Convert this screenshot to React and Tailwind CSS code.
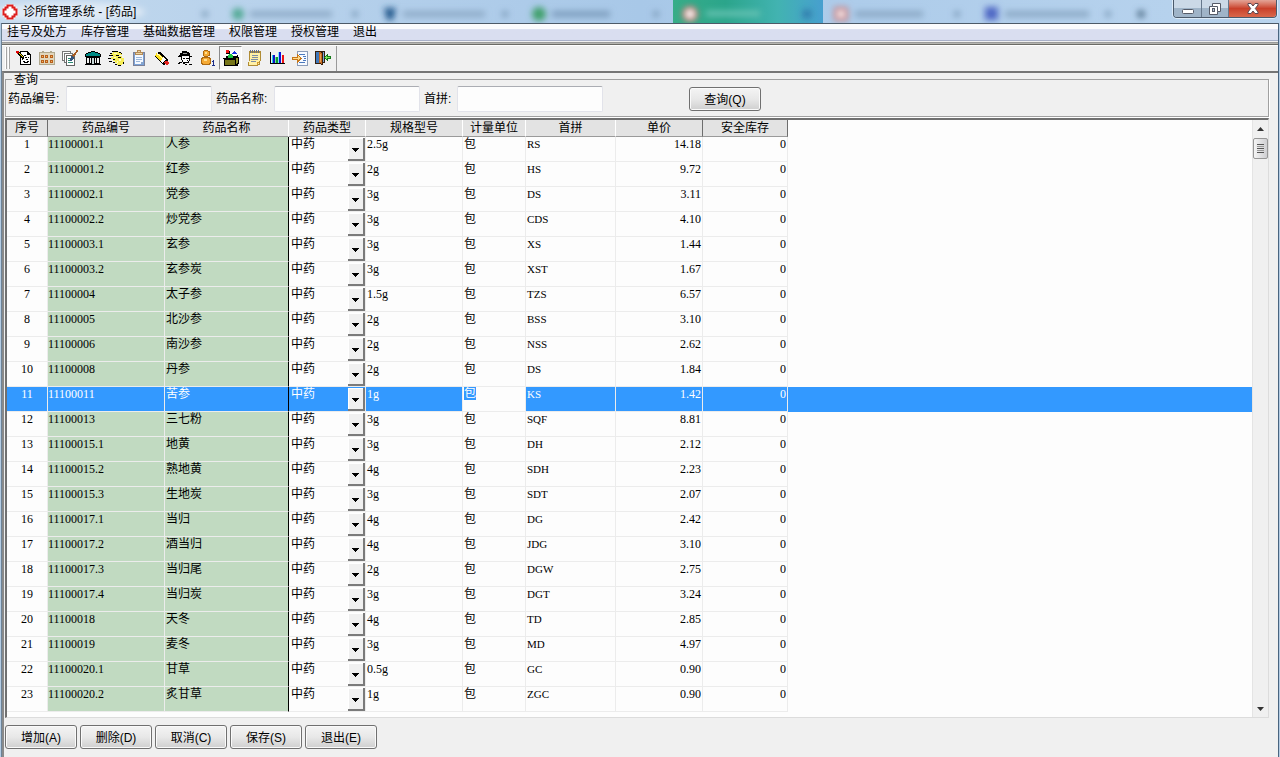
import { useState } from "react";

const menus = ["挂号及处方", "库存管理", "基础数据管理", "权限管理", "授权管理", "退出"];

const columns = [
  { title: "序号", width: "w-[41px]", edge: "border-r-[#6e6e6e]" },
  { title: "药品编号", width: "w-[117px]", edge: "border-r-white" },
  { title: "药品名称", width: "w-[124px]", edge: "border-r-white" },
  { title: "药品类型", width: "w-[77px]", edge: "border-r-white" },
  { title: "规格型号", width: "w-[97px]", edge: "border-r-white" },
  { title: "计量单位", width: "w-[63px]", edge: "border-r-white" },
  { title: "首拼", width: "w-[90px]", edge: "border-r-white" },
  { title: "单价", width: "w-[87px]", edge: "border-r-[#6e6e6e]" },
  { title: "安全库存", width: "w-[85px]", edge: "border-r-[#6e6e6e]" },
];

const medicines = [
  ["11100001.1", "人参", "2.5g", "RS", "14.18"],
  ["11100001.2", "红参", "2g", "HS", "9.72"],
  ["11100002.1", "党参", "3g", "DS", "3.11"],
  ["11100002.2", "炒党参", "3g", "CDS", "4.10"],
  ["11100003.1", "玄参", "3g", "XS", "1.44"],
  ["11100003.2", "玄参炭", "3g", "XST", "1.67"],
  ["11100004", "太子参", "1.5g", "TZS", "6.57"],
  ["11100005", "北沙参", "2g", "BSS", "3.10"],
  ["11100006", "南沙参", "2g", "NSS", "2.62"],
  ["11100008", "丹参", "2g", "DS", "1.84"],
  ["11100011", "苦参", "1g", "KS", "1.42"],
  ["11100013", "三七粉", "3g", "SQF", "8.81"],
  ["11100015.1", "地黄", "3g", "DH", "2.12"],
  ["11100015.2", "熟地黄", "4g", "SDH", "2.23"],
  ["11100015.3", "生地炭", "3g", "SDT", "2.07"],
  ["11100017.1", "当归", "4g", "DG", "2.42"],
  ["11100017.2", "酒当归", "4g", "JDG", "3.10"],
  ["11100017.3", "当归尾", "2g", "DGW", "2.75"],
  ["11100017.4", "当归炭", "3g", "DGT", "3.24"],
  ["11100018", "天冬", "4g", "TD", "2.85"],
  ["11100019", "麦冬", "3g", "MD", "4.97"],
  ["11100020.1", "甘草", "0.5g", "GC", "0.90"],
  ["11100020.2", "炙甘草", "1g", "ZGC", "0.90"],
];

const tools = [
  {
    name: "挂号",
    art: (
      <>
        <path d="M4 1h8v1h1v1h1v1h1v11H4z" fill="#000" />
        <path d="M5 2h6v3h3v9H5z" fill="#fff" />
        <path d="M8 5h2v1H8zM9 7h2v1H9zM12 7h1v1h-1zM6 9h1v1H6zM10 9h2v1h-2zM7 11h2v1H7zM11 11h2v1h-2zM8 12h4v1H8z" fill="#000" />
        <path d="M2 2h2v1h1v1h1v1h1v1h1v3H6V8H5V7H4V6H3V5H2z" fill="#000" />
        <path d="M3 3h1v1h1v1h1v1h1v1H6V6H5V5H4V4H3z" fill="#ffe600" />
        <path d="M0 1h3v2H2v1H1V3H0z" fill="#e00000" />
      </>
    ),
  },
  {
    name: "药柜",
    art: (
      <>
        <path d="M0 2h3V1h2v1h6V1h2v1h3v13H0z" fill="#b0a88e" />
        <path d="M1 3h14v11H1z" fill="#e0d6bd" />
        <path d="M2 5h3v3H2zM6 5h3v3H6zM11 5h3v3h-3zM2 10h3v3H2zM6 10h3v3H6zM11 10h3v3h-3z" fill="#b85f1c" />
        <path d="M3 6h1v1H3zM7 6h1v1H7zM12 6h1v1h-1zM3 11h1v1H3zM7 11h1v1H7zM12 11h1v1h-1z" fill="#f6b55e" />
      </>
    ),
  },
  {
    name: "处方",
    art: (
      <>
        <path d="M0 1h9v10H0z" fill="#777" />
        <path d="M1 2h7v8H1z" fill="#fff" />
        <path d="M2 3h9v10H2z" fill="#777" />
        <path d="M3 4h7v8H3z" fill="#fff" />
        <path d="M4 5h9v11H4z" fill="#646464" />
        <path d="M5 6h7v9H5z" fill="#fff" />
        <path d="M6 8h3v1H6zM6 10h2v1H6zM6 12h5v1H6z" fill="#2b8a72" />
        <path d="M14 0h2v2h-1v1h-1v2h-1v1h-1v1h-2V5h1V4h1V3h1V2h1z" fill="#a85a20" />
        <path d="M9 6h2v1h1v2h-1v1h-1v1H8V8h1z" fill="#34547c" />
      </>
    ),
  },
  {
    name: "库房",
    art: (
      <>
        <path d="M6 1h4v1h3v1h2v1h1v3H0V4h1V3h2V2h3z" fill="#000" />
        <path d="M6 2h4v1h3v1h2v2H1V4h2V3h3z" fill="#008b86" />
        <path d="M1 7h14v7H1zM0 14h16v1H0z" fill="#000" />
        <path d="M2 8h2v5H2zM5 8h1v5H5zM10 8h1v5h-1zM12 8h2v5h-2z" fill="#f0f0f0" />
        <path d="M7 8h2v6H7z" fill="#c8d8d8" />
      </>
    ),
  },
  {
    name: "诊疗",
    art: (
      <>
        <path d="M5 2h7v1h2v2h-3v1h3v2h2v6h-2v1H9v-2H7v-2H5V9H3V7h2V5H3V3h2z" fill="#f6ee57" />
        <path d="M4 1h6v1H4zM11 2h2v1h-2zM13 3h1v1h-1zM2 3h2v1H2zM1 5h4v1H1zM0 8h3v1H0zM5 9h2v1H5zM1 11h3v1H1zM5 12h2v1H5zM8 5h3v1H8zM10 7h3v1h-3zM7 14h2v1H7zM10 15h3v1h-3zM15 12h1v2h-1z" fill="#000" />
        <path d="M6 3h3v1H6zM6 7h2v1H6zM11 9h2v2h-2zM9 11h1v2H9z" fill="#fffcc5" />
      </>
    ),
  },
  {
    name: "记录",
    art: (
      <>
        <path d="M2 2h12v14H2z" fill="#7d8298" />
        <path d="M3 3h10v12H3z" fill="#7ba3d8" />
        <path d="M4 5h8v9H4z" fill="#f5f9ff" />
        <path d="M5 7h6v1H5zM5 9h6v1H5zM5 11h4v1H5z" fill="#9bb7da" />
        <path d="M6 0h4v2h2v3H4V2h2z" fill="#b38a55" />
        <path d="M7 1h2v1H7zM5 3h6v1H5z" fill="#edd5a4" />
        <path d="M10 12h2v2h-2z" fill="#8aa6cc" />
      </>
    ),
  },
  {
    name: "擦除",
    art: (
      <>
        <path d="M3 4 12.500 12.500" stroke="#000" strokeWidth="7" fill="none" />
        <path d="M2 4 9 10" stroke="#ffe21a" strokeWidth="4" fill="none" />
        <path d="M3 3.500 10 9.500" stroke="#fffbd0" strokeWidth="1" fill="none" />
        <path d="M8 9 10.500 11" stroke="#fff" strokeWidth="5" fill="none" />
        <path d="M11 11h3v1h1v2h-1v1h-2v-1h-1v-1h-1v-1h1z" fill="#e52620" />
      </>
    ),
  },
  {
    name: "人员",
    art: (
      <>
        <path d="M5 1h5v1h2v1h1v3h2v1h-3V6H5v1H1V6h1V5h1V3h2z" fill="#000" />
        <path d="M5 7h7v5h-1v1H8v-1H6v-2H5z" fill="#fff" />
        <path d="M4 7h1v3H4zM6 8h2v1H6zM9 8h3v1H9zM12 7h1v4h-1zM10 10h1v1h-1zM5 10h1v2H5zM8 12h3v1H8zM6 12h2v2H6zM11 11h1v2h-1zM2 12h3v1H2zM1 13h2v1H1zM12 14h3v1h-3zM8 14h2v1H8z" fill="#000" />
        <path d="M6 3h4v1H6z" fill="#999" />
      </>
    ),
  },
  {
    name: "用户",
    art: (
      <>
        <path d="M4 0h4v1h2v5H8v1h2v1h1v6h-1v1H2v-1H1V8h1V7h2V6H3V1h1z" fill="#ae6a12" />
        <path d="M4 1h4v1h1v3H8v1H4V5H4zM3 8h6v1h1v4H9v1H3v-1H2V9h1z" fill="#f5a933" />
        <path d="M5 2h2v2H5zM4 9h3v2H4z" fill="#ffdf91" />
        <path d="M13 10h1v5h1v1h-3v-1h1v-3h-1v-1h1z" fill="#1d2c86" />
      </>
    ),
  },
  {
    name: "药品",
    art: (
      <>
        <path d="M0 8h3V6h11V5h1v2h1v7h-1v2H1V9H0z" fill="#000" />
        <path d="M2 10h10v5H2z" fill="#77761a" />
        <path d="M13 8h2v5h-1v1h-1z" fill="#8f8e28" />
        <path d="M3 1h4v3H3z" fill="#000" />
        <path d="M3 0h3v3H3z" fill="#f01414" />
        <path d="M11 1h1v1h1v1h1v1H9V3h1V2h1z" fill="#1933df" />
        <path d="M3 4h3v2H3zM10 4h3v2h-3z" fill="#fff" />
        <path d="M6 4h3v1h1v3H5V5h1z" fill="#18c342" />
      </>
    ),
    pressed: true,
  },
  {
    name: "单据",
    art: (
      <>
        <path d="M3 1h12v10h-1v4h-2v1H2v-4h1z" fill="#b08c35" />
        <path d="M4 3h10v8h-1v3h-2v1H3v-4h1z" fill="#fff0a6" />
        <path d="M4 0h1v3H4zM6 0h1v3H6zM8 0h1v3H8zM10 0h1v3h-1zM12 0h1v3h-1z" fill="#666f84" />
        <path d="M6 5h6v1H6zM6 7h6v1H6zM5 9h7v1H5zM5 11h5v1H5z" fill="#7c8ca5" />
        <path d="M11 12h2v1h-1v2h-1z" fill="#d79b2a" />
      </>
    ),
  },
  {
    name: "统计",
    art: (
      <>
        <path d="M1 2h1v11h14v1H1z" fill="#000" />
        <path d="M3 5h1v8H3z" fill="#20d0e8" />
        <path d="M4 5h2v8H4z" fill="#1010c7" />
        <path d="M6 7h1v6H6z" fill="#77e58c" />
        <path d="M7 7h2v6H7z" fill="#0a9a33" />
        <path d="M9 2h1v11H9z" fill="#7ce8f0" />
        <path d="M10 2h2v11h-2z" fill="#0b12dd" />
        <path d="M13 5h2v8h-2z" fill="#ed1414" />
      </>
    ),
  },
  {
    name: "导入",
    art: (
      <>
        <path d="M5 1h11v15H5z" fill="#8b9cb8" />
        <path d="M6 2h9v13H6z" fill="#f7faff" />
        <path d="M7 4h6v1H7zM11 6h3v1h-3zM12 8h2v1h-2zM11 10h3v1h-3zM7 12h6v1H7z" fill="#4b79bd" />
        <path d="M5 4h1v1h1v1h1v1h1v1h1v1H9v1H8v1H7v1H6v1H5v-3H0V7h5z" fill="#c77718" />
        <path d="M6 6h1v1h1v2H7v1H6V9H1V8h5z" fill="#ffda87" />
      </>
    ),
  },
  {
    name: "退出系统",
    art: (
      <>
        <path d="M0 1h10v12H8v2H6v-1H0z" fill="#35200e" />
        <path d="M1 2h3v11H1z" fill="#3f78bb" />
        <path d="M4 2h2v1h1v11H6v-1H4z" fill="#c66a1e" />
        <path d="M5 4h1v8H5z" fill="#e9a052" />
        <path d="M8 2h1v10H8z" fill="#79a8db" />
        <path d="M12 4h1v2h3v3h-3v2h-1v-1h-1V9h-1V8H9V7h1V6h1V5h1z" fill="#137a18" />
        <path d="M12 6v1h3v1h-3v1h-1V8h-1V7h1V6z" fill="#7fe55c" />
      </>
    ),
  },
];

const actions = ["增加(A)", "删除(D)", "取消(C)", "保存(S)", "退出(E)"];

const Button = ({ children }) => (
  <button
    type="button"
    className="h-6 w-[72px] rounded-[3px] border border-[#707070] bg-linear-to-b from-[#f4f4f4] via-[#e8e8e8] to-[#cfcfcf] text-xs leading-6 text-black shadow-[inset_0_0_0_1px_#fafafa]"
  >
    {children}
  </button>
);

const SearchField = ({ label, id, width }) => (
  <div className="flex items-center">
    <label htmlFor={id} className={width}>
      {label}:
    </label>
    <input
      id={id}
      type="text"
      className="h-[26px] w-[146px] rounded-[2px] border border-[#e2e3ea] border-t-[#abadb3] bg-[#fdfdfd] px-1 outline-none"
    />
  </div>
);

const TitleBar = () => (
  <header className="relative flex h-[23px] items-center overflow-hidden bg-linear-to-r from-[#c3d9ee] via-[#a8c8e8] to-[#b9d4ee]">
    {/* tabs of the window behind, seen through the glass */}
    <svg className="absolute top-0 left-0" width="1280" height="23" aria-hidden="true">
      <defs>
        <filter id="glass" x="-10%" y="-100%" width="120%" height="300%">
          <feGaussianBlur stdDeviation="3" />
        </filter>
        <linearGradient id="tab">
          <stop offset="0" stopColor="#37ad88" />
          <stop offset="0.35" stopColor="#2ba58b" />
          <stop offset="0.7" stopColor="#42b3b1" />
          <stop offset="1" stopColor="#479fcf" />
        </linearGradient>
      </defs>
      <rect x="673" y="0" width="150" height="23" fill="url(#tab)" />
      <g filter="url(#glass)">
        <ellipse cx="70" cy="12" rx="75" ry="10" fill="#eef4fa" opacity="0.7" />
        <rect x="250" y="11" width="82" height="6" fill="#8eabc8" />
        <rect x="403" y="11" width="82" height="6" fill="#8eabc8" />
        <rect x="552" y="11" width="58" height="6" fill="#7d9dbd" />
        <rect x="706" y="11" width="54" height="5" fill="#6cc5b5" />
        <rect x="855" y="11" width="68" height="6" fill="#8aa8c5" />
        <rect x="1005" y="11" width="84" height="6" fill="#8aa8c5" />
        <circle cx="205" cy="14" r="3" fill="#7897b5" />
        <circle cx="355" cy="14" r="3" fill="#7897b5" />
        <circle cx="505" cy="14" r="3" fill="#7897b5" />
        <circle cx="656" cy="14" r="3" fill="#7897b5" />
        <circle cx="807" cy="14" r="5" fill="#337eae" />
        <circle cx="957" cy="14" r="3" fill="#7897b5" />
        <circle cx="1108" cy="14" r="3" fill="#7897b5" />
        <circle cx="1141" cy="14" r="4" fill="#56748f" />
        <circle cx="238" cy="14" r="6" fill="#4fa893" />
        <path d="M384 8h12l-3 12h-6z" fill="#24598c" />
        <circle cx="539" cy="14" r="7" fill="#3fa06c" />
        <circle cx="690" cy="14" r="8" fill="#b4776d" />
        <rect x="834" y="7" width="14" height="14" fill="#c48489" />
        <rect x="985" y="7" width="13" height="13" fill="#4f68c4" />
      </g>
      <g filter="url(#glass)">
        <circle cx="690" cy="14" r="5" fill="#fff" />
        <circle cx="841" cy="14" r="4" fill="#fff" />
      </g>
    </svg>
    <svg className="relative mt-px ml-0.5 size-4" viewBox="0 0 16 16" aria-hidden="true">
      <circle cx="8" cy="8" r="8" fill="#fff" />
      <path
        d="M5.500 1.500h5v2h2v2h2v5h-2v2h-2v2h-5v-2h-2v-2h-2v-5h2v-2h2z"
        fill="none"
        stroke="#dc1f1f"
        strokeWidth="2"
      />
      <path d="M7 4h2v3h3v2H9v3H7V9H4V7h3z" fill="#fff" />
    </svg>
    <h1 className="relative ml-[5px] text-xs text-black">诊所管理系统 - [药品]</h1>
    <div className="relative mr-[3px] ml-auto flex h-[18px] self-start overflow-hidden rounded-b-[4px] border border-t-0 border-[#4b5a6b] shadow-[0_0_0_1px_#dcebf8]">
      <button type="button" aria-label="最小化" className="flex w-7 items-center justify-center border-r border-[#66788c] bg-linear-to-b from-[#cbd9e7] from-50% to-[#9fb4c8] to-50%">
        <svg width="12" height="14" viewBox="0 0 12 14">
          <rect x="0.5" y="7.5" width="11" height="4" rx="1" fill="#fff" stroke="#555b68" />
        </svg>
      </button>
      <button type="button" aria-label="还原" className="flex w-[27px] items-center justify-center border-r border-[#66788c] bg-linear-to-b from-[#cbd9e7] from-50% to-[#9fb4c8] to-50%">
        <svg width="12" height="12" viewBox="0 0 12 12">
          <path d="M3.500.5h8v8h-3v3h-8v-8h3z" fill="#fff" stroke="#555b68" />
          <path d="M3.500 3.500h5v5" fill="none" stroke="#555b68" />
          <rect x="3.500" y="5.500" width="2" height="3" fill="#b7c6d6" stroke="#555b68" />
        </svg>
      </button>
      <button type="button" aria-label="关闭" className="flex w-[47px] items-center justify-center bg-linear-to-b from-[#e3a497] via-[#c9402a] via-50% to-[#d9674b]">
        <svg width="12" height="11" viewBox="0 0 12 11">
          <path d="M1 .5h3l2 2.500L8 .5h3v1.500L8.300 5.500 11 9v1.500H8L6 8l-2 2.500H1V9l2.700-3.500L1 2z" fill="#fff" stroke="#5a4650" />
        </svg>
      </button>
    </div>
  </header>
);

const ToolBar = () => (
  <div className="flex h-[26px] border-t border-white">
    <div className="flex border-r border-[#9a9a9a] pr-[2px] pl-[3px]">
      <div className="mt-px mr-[2px] flex gap-px">
        <span className="h-[22px] w-[2px] border-r border-[#a5a5a5] bg-white" />
        <span className="h-[22px] w-[2px] border-r border-[#a5a5a5] bg-white" />
      </div>
      {tools.map((tool) => (
        <button
          key={tool.name}
          type="button"
          title={tool.name}
          aria-label={tool.name}
          className={
            tool.pressed
              ? "flex h-6 w-[23px] items-center justify-center border border-t-[#8a8a8a] border-r-white border-b-white border-l-[#8a8a8a] bg-[#f8f8f8]"
              : "flex h-6 w-[23px] items-center justify-center"
          }
        >
          <svg className="size-4 shrink-0" viewBox="0 0 16 16" shapeRendering="crispEdges" aria-hidden="true">
            {tool.art}
          </svg>
        </button>
      ))}
    </div>
  </div>
);

const MedicineRow = ({ row, index, active, onSelect }) => {
  const [code, name, spec, pinyin, price] = row;
  const cell = "h-[25px] border-r border-b border-[#ececec] p-0 align-top leading-[15px]";
  const key = active ? "" : "bg-[#c1dac1]";
  const latin = "font-['Liberation_Serif','Noto_Sans_CJK_SC',serif]";

  return (
    <tr onClick={onSelect} className={active ? "bg-[#3399ff] text-white" : "text-black"}>
      <td className={`${cell} ${latin} text-center`}>{index + 1}</td>
      <td className={`${cell} ${latin} ${key}`}>{code}</td>
      <td className={`${cell} ${key} border-r-black pl-px`}>{name}</td>
      <td className={`${cell} relative`}>
        <select
          aria-label={`${name} 药品类型`}
          defaultValue="中药"
          className="block h-6 w-full appearance-none pb-[9px] pl-[2px] leading-[15px] outline-none"
        >
          <option>中药</option>
          <option>西药</option>
        </select>
        <span className="pointer-events-none absolute top-px right-0 flex h-[23px] w-[17px] items-center justify-center border-r-2 border-b-2 border-[#7a7a7a] bg-[#f0f0f0] pt-[3px] shadow-[inset_1px_1px_0_#fff]">
          <svg width="7" height="4" viewBox="0 0 7 4" shapeRendering="crispEdges">
            <path d="M0 0h7v1H6v1H5v1H4v1H3V3H2V2H1V1H0z" />
          </svg>
        </span>
      </td>
      <td className={`${cell} ${latin} pl-px`}>{spec}</td>
      <td className={active ? `${cell} bg-[#fdfdfd] pl-px text-black` : `${cell} pl-px`}>
        {active ? (
          <input
            autoFocus
            aria-label="计量单位"
            defaultValue="包"
            onFocus={(e) => e.target.select()}
            className="block h-[13px] w-full p-0 leading-[13px] outline-none selection:bg-[#3399ff] selection:text-white"
          />
        ) : (
          "包"
        )}
      </td>
      <td className={`${cell} font-['Liberation_Serif',serif] pl-px text-[11px]`}>{pinyin}</td>
      <td className={`${cell} ${latin} pr-px text-right`}>{price}</td>
      <td className={`${cell} ${latin} pr-px text-right`}>0</td>
      <td className="p-0" />
    </tr>
  );
};

const ScrollBar = () => (
  <div className="flex w-4 shrink-0 flex-col items-center justify-between border-l border-[#e4e4e4] bg-[#f0f0f0]">
    <div className="flex flex-col items-center">
      <span className="flex h-[18px] items-center">
        <svg width="7" height="4" viewBox="0 0 7 4" aria-hidden="true">
          <path d="M0 4 3.500 0 7 4z" fill="#333" />
        </svg>
      </span>
      <span className="flex h-[21px] w-[15px] flex-col items-center justify-center gap-px rounded-[2px] border border-[#979797] bg-linear-to-r from-[#f4f4f4] to-[#cfcfd2]">
        <span className="h-px w-[7px] bg-[#555]" />
        <span className="h-px w-[7px] bg-[#999]" />
        <span className="h-px w-[7px] bg-[#555]" />
        <span className="h-px w-[7px] bg-[#999]" />
        <span className="h-px w-[7px] bg-[#555]" />
      </span>
    </div>
    <span className="flex h-[17px] items-center">
      <svg width="7" height="4" viewBox="0 0 7 4" aria-hidden="true">
        <path d="M0 0h7L3.500 4z" fill="#333" />
      </svg>
    </span>
  </div>
);

const App = () => {
  const [selected, setSelected] = useState(10);

  return (
    <div className="flex min-h-screen flex-col bg-[#f0f0f0] font-['Liberation_Sans','Noto_Sans_CJK_SC',sans-serif] text-xs text-black">
      <TitleBar />

      <div className="flex flex-1 border-x border-[#b4cce4]">
        <div className="flex min-w-0 flex-1 flex-col border-x border-t border-t-[#4c5a68] border-r-[#4a6580] border-l-[#6c8296]">
          <nav className="flex h-[17px] items-center gap-[14px] border-b border-[#a8b0c8] bg-linear-to-b from-[#fafbfd] from-30% to-[#d9def0] to-35% pl-[5px] leading-4">
            {menus.map((menu) => (
              <button key={menu} type="button">
                {menu}
              </button>
            ))}
          </nav>
          <div className="mt-px h-[3px] border-y border-t-[#9a9a9a] border-b-[#6b6b66] bg-[#b5b5b0]" />
          <ToolBar />

          <main className="flex flex-1 flex-col border-t-2 border-l-2 border-t-[#757575] border-l-[#8a8a8a] pr-[9px] pl-px">
            <form onSubmit={(e) => e.preventDefault()}>
              <fieldset className="border border-[#a0a0a0] px-[2px] pb-[4px] shadow-[1px_1px_0_#fff]">
                <legend className="ml-[4px] h-[13px] px-[2px] leading-[15px]">查询</legend>
                <div className="flex items-center gap-1">
                  <SearchField label="药品编号" id="code" width="w-[58px]" />
                  <SearchField label="药品名称" id="name" width="w-[58px]" />
                  <SearchField label="首拼" id="pinyin" width="w-[33px]" />
                  <div className="ml-[82px] flex">
                    <Button>查询(Q)</Button>
                  </div>
                </div>
              </fieldset>
            </form>

            <div className="mt-px flex flex-1 border-t-2 border-r border-b border-l-2 border-t-[#707070] border-r-[#dcdcdc] border-b-[#dcdcdc] border-l-[#707070] bg-[#fdfdfd]">
              <div className="min-w-0 flex-1 pb-1">
                <table className="w-full table-fixed border-separate border-spacing-0">
                  <thead>
                    <tr>
                      {columns.map((col) => (
                        <th
                          key={col.title}
                          className={`${col.width} ${col.edge} h-[17px] border-r border-b border-b-[#9a9a9a] bg-[#e3e3e3] p-0 leading-4 font-normal`}
                        >
                          {col.title}
                        </th>
                      ))}
                      <th className="p-0" />
                    </tr>
                  </thead>
                  <tbody>
                    {medicines.map((row, i) => (
                      <MedicineRow
                        key={row[0]}
                        row={row}
                        index={i}
                        active={i === selected}
                        onSelect={() => setSelected(i)}
                      />
                    ))}
                  </tbody>
                </table>
              </div>
              <ScrollBar />
            </div>

            <div className="flex gap-[3px] pt-[7px] pb-2">
              {actions.map((action) => (
                <Button key={action}>{action}</Button>
              ))}
            </div>
          </main>
        </div>
      </div>
    </div>
  );
};

export default App;
